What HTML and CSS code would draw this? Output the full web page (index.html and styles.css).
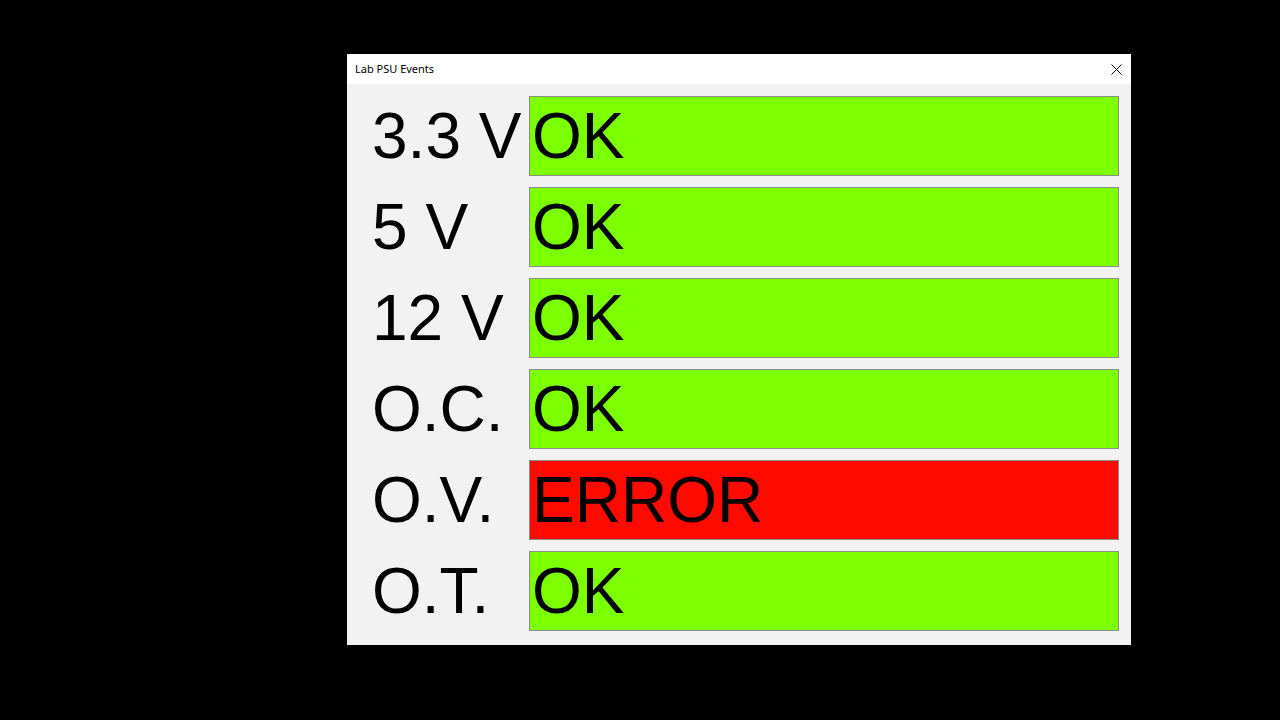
FILE: index.html
```html
<!DOCTYPE html>
<html lang="en">
<head>
<meta charset="utf-8">
<title>Lab PSU Events</title>
<link rel="stylesheet" href="styles.css">
</head>
<body>
<div class="window">
  <div class="titlebar">
    <span class="title">Lab PSU Events</span>
    <span class="close" aria-label="Close">
      <svg width="11" height="11" viewBox="0 0 11 11"><path d="M0.5 0.5 L10.5 10.5 M10.5 0.5 L0.5 10.5" stroke="#000" stroke-width="1" fill="none"/></svg>
    </span>
  </div>
  <div class="content">
    <div class="label">3.3 V</div><div class="status ok">OK</div>
    <div class="label">5 V</div><div class="status ok">OK</div>
    <div class="label">12 V</div><div class="status ok">OK</div>
    <div class="label">O.C.</div><div class="status ok">OK</div>
    <div class="label">O.V.</div><div class="status error">ERROR</div>
    <div class="label">O.T.</div><div class="status ok">OK</div>
  </div>
</div>
</body>
</html>
```
FILE: styles.css
```css
html, body {
  margin: 0;
  padding: 0;
  background: #000;
}
body {
  width: 1280px;
  height: 720px;
  overflow: hidden;
  padding-top: 54px;
  box-sizing: border-box;
}
.window {
  margin-left: 347px;
  width: 784px;
  height: 591px;
  background: #f2f2f2;
  display: flex;
  flex-direction: column;
}
.titlebar {
  height: 30px;
  background: #fff;
  display: flex;
  align-items: center;
  justify-content: space-between;
  padding: 0 9px 0 8px;
  font-family: "Noto Sans", "Liberation Sans", sans-serif;
  font-size: 11px;
  color: #000;
}
.title {
  line-height: 30px;
}
.close {
  display: flex;
  width: 11px;
  height: 11px;
}
.content {
  display: grid;
  grid-template-columns: 158px 590px;
  grid-auto-rows: 80px;
  row-gap: 11px;
  padding: 12px 12px 14px 24px;
  font-family: "Liberation Sans", Arial, sans-serif;
  font-size: 64px;
  color: #000;
}
.label {
  line-height: 78px;
  padding-top: 1px;
  padding-left: 1px;
  white-space: nowrap;
}
.status {
  border: 1px solid #8c8c8c;
  line-height: 78px;
  padding-left: 2px;
  white-space: nowrap;
}
.ok {
  background: #7cff00;
}
.error {
  background: #ff0a00;
}
```
